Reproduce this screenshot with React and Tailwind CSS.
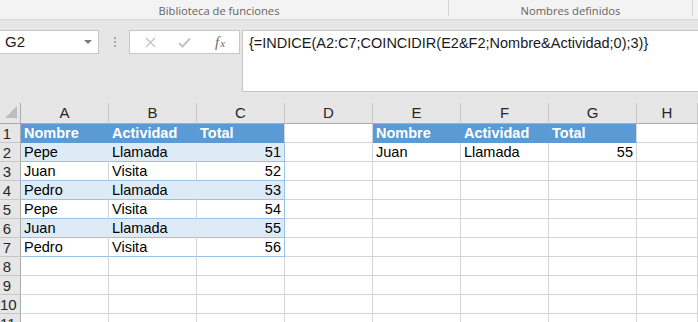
import React from "react";

const COLS = ["A", "B", "C", "D", "E", "F", "G", "H"];

function cellData(r, c) {
  const t1 = {
    1: ["Nombre", "Actividad", "Total"],
    2: ["Pepe", "Llamada", "51"],
    3: ["Juan", "Visita", "52"],
    4: ["Pedro", "Llamada", "53"],
    5: ["Pepe", "Visita", "54"],
    6: ["Juan", "Llamada", "55"],
    7: ["Pedro", "Visita", "56"],
  };
  const t2 = {
    1: ["Nombre", "Actividad", "Total"],
    2: ["Juan", "Llamada", "55"],
  };
  if (c <= 2 && t1[r]) {
    return { text: t1[r][c], table: 1, header: r === 1, band: r % 2 === 0 && r > 1, right: c === 2 && r > 1, last: c === 2 };
  }
  if (c >= 4 && c <= 6 && t2[r]) {
    return { text: t2[r][c - 4], table: 2, header: r === 1, band: false, right: c === 6 && r > 1, last: c === 6 };
  }
  return null;
}

function Cell({ r, c }) {
  const d = cellData(r, c);
  if (!d) {
    return <div className="h-[19px] border-r border-b border-[#d4d4d4]" />;
  }
  let cls = "h-[19px] flex items-center pt-[2px] border-b overflow-hidden whitespace-nowrap ";
  if (d.header) {
    cls += "bg-[#5b9bd5] text-white font-bold px-[3px] border-b-[#5b9bd5] ";
    cls += d.last ? "border-r border-r-[#d4d4d4] " : "border-r border-r-[#5b9bd5] ";
  } else if (d.table === 1) {
    cls += d.band ? "bg-[#ddebf7] " : "bg-white ";
    cls += "border-b-[#9bc2e6] border-r ";
    if (d.last) cls += "border-r-[#9bc2e6] ";
    else cls += d.band ? "border-r-[#ddebf7] " : "border-r-[#d4d4d4] ";
    cls += "px-[3px] ";
  } else {
    cls += "bg-white border-b-[#d4d4d4] border-r border-r-[#d4d4d4] px-[3px] ";
  }
  if (d.right) cls += "justify-end ";
  return <div className={cls}>{d.text}</div>;
}

export default function App() {
  const rows = [1, 2, 3, 4, 5, 6, 7, 8, 9, 10, 11];
  return (
    <div className="w-[698px] h-[322px] overflow-hidden bg-white">
      {/* Ribbon group labels */}
      <div className="h-[20px] bg-[#f3f3f3] flex text-[11.2px] text-[#636363] font-['Open_Sans',sans-serif] border-b border-[#dadada]">
        <div className="w-[449px] border-r border-[#d6d6d6] flex items-start justify-center pt-[3px] h-[16px] pr-[10px]">
          Biblioteca de funciones
        </div>
        <div className="w-[244px] border-r border-[#d6d6d6] flex items-start justify-center pt-[3px] h-[16px]">
          Nombres definidos
        </div>
      </div>
      {/* Formula bar area */}
      <div className="h-[83px] bg-[#e6e6e6] flex items-start pt-[10px] font-['Liberation_Sans',Arial,sans-serif] text-[14.5px] text-[#1a1a1a]">
        <div className="w-[99px] h-[24px] bg-white border border-[#c6c6c6] border-l-0 flex items-center justify-between pl-[5px] pr-[6px]">
          <span className="text-[15px]">G2</span>
          <svg width="8" height="5" viewBox="0 0 8 5"><path d="M0 0 L8 0 L4 4 Z" fill="#7a7a7a" /></svg>
        </div>
        <div className="w-[30px] h-[24px] flex flex-col items-center justify-center gap-[2px] pl-[1px]">
          <div className="w-[2px] h-[2px] bg-[#a8a8a8]" />
          <div className="w-[2px] h-[2px] bg-[#a8a8a8]" />
          <div className="w-[2px] h-[2px] bg-[#a8a8a8]" />
        </div>
        <div className="w-[111px] h-[24px] bg-white border border-[#c6c6c6] flex items-center">
          <div className="w-[36px] flex justify-center pl-[4px]">
            <svg width="11" height="11" viewBox="0 0 11 11"><path d="M1 1 L10 10 M10 1 L1 10" stroke="#c3c3c3" strokeWidth="1.3" /></svg>
          </div>
          <div className="w-[36px] flex justify-center">
            <svg width="13" height="11" viewBox="0 0 13 11"><path d="M1 6 L4.5 9.5 L12 1.5" stroke="#c3c3c3" strokeWidth="2" fill="none" /></svg>
          </div>
          <div className="w-[36px] flex justify-center items-baseline text-[#6a6a6a] italic font-['Liberation_Serif',serif] text-[15px] leading-none">
            <span>f</span><span className="text-[11px] ml-[1px]">x</span>
          </div>
        </div>
        <div className="ml-[2px] flex-1 h-[62px] bg-white border border-[#c6c6c6] border-r-0 pl-[6px] pt-[2px] leading-[20px] whitespace-nowrap">
          {"{=INDICE(A2:C7;COINCIDIR(E2&F2;Nombre&Actividad;0);3)}"}
        </div>
      </div>
      {/* Sheet grid */}
      <div className="grid grid-cols-[21px_repeat(7,88px)_1fr] font-['Liberation_Sans',Arial,sans-serif] text-[14.5px] text-black">
        <div className="h-[21px] bg-[#e6e6e6] border-r border-b border-[#ababab] relative overflow-hidden">
          <svg className="absolute left-[5px] top-[3px]" width="12" height="12" viewBox="0 0 12 12"><path d="M12 0 L12 12 L0 12 Z" fill="#bdbdbd" /></svg>
        </div>
        {COLS.map((c) => (
          <div key={c} className="h-[21px] bg-[#e6e6e6] border-r border-r-[#c8c8c8] border-b border-b-[#ababab] flex items-center justify-center text-[15px] text-[#262626]">
            {c}
          </div>
        ))}
        {rows.map((r) => (
          <React.Fragment key={r}>
            <div className="h-[19px] bg-[#e6e6e6] border-r border-r-[#ababab] border-b border-b-[#c8c8c8] text-[15px] text-[#262626] flex items-center pt-[2px]">
              <span className="w-[14px] text-center">{r}</span>
            </div>
            {COLS.map((c, ci) => (
              <Cell key={c} r={r} c={ci} />
            ))}
          </React.Fragment>
        ))}
      </div>
    </div>
  );
}
